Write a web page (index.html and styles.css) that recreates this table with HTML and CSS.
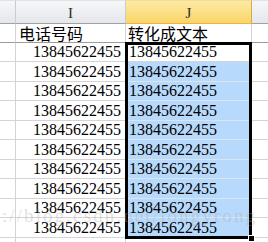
FILE: index.html
```html
<!DOCTYPE html>
<html>
<head>
<meta charset="utf-8">
<link rel="stylesheet" href="styles.css">
</head>
<body>
<div class="sheet">
  <div class="row head">
    <div class="c a"></div>
    <div class="c i hc">I</div>
    <div class="c j hc hsel">J</div>
    <div class="c k"></div>
  </div>
  <div class="row r1">
    <div class="c a"></div>
    <div class="c i cjk">电话号码</div>
    <div class="c j cjk">转化成文本</div>
    <div class="c k"></div>
  </div>
  <div class="row data">
    <div class="c a"></div><div class="c i num">13845622455</div><div class="c j num active">13845622455</div><div class="c k"></div>
  </div>
  <div class="row data tall">
    <div class="c a"></div><div class="c i num">13845622455</div><div class="c j num blue">13845622455</div><div class="c k"></div>
  </div>
  <div class="row data">
    <div class="c a"></div><div class="c i num">13845622455</div><div class="c j num blue">13845622455</div><div class="c k"></div>
  </div>
  <div class="row data tall">
    <div class="c a"></div><div class="c i num">13845622455</div><div class="c j num blue">13845622455</div><div class="c k"></div>
  </div>
  <div class="row data">
    <div class="c a"></div><div class="c i num">13845622455</div><div class="c j num blue">13845622455</div><div class="c k"></div>
  </div>
  <div class="row data tall">
    <div class="c a"></div><div class="c i num">13845622455</div><div class="c j num blue">13845622455</div><div class="c k"></div>
  </div>
  <div class="row data">
    <div class="c a"></div><div class="c i num">13845622455</div><div class="c j num blue">13845622455</div><div class="c k"></div>
  </div>
  <div class="row data tall">
    <div class="c a"></div><div class="c i num">13845622455</div><div class="c j num blue">13845622455</div><div class="c k"></div>
  </div>
  <div class="row data">
    <div class="c a"></div><div class="c i num">13845622455</div><div class="c j num blue">13845622455</div><div class="c k"></div>
  </div>
  <div class="row data tall">
    <div class="c a"></div><div class="c i num">13845622455</div><div class="c j num blue">13845622455</div><div class="c k"></div>
  </div>
  <div class="row data">
    <div class="c a"></div><div class="c i"></div><div class="c j"></div><div class="c k"></div>
  </div>
  <div class="selbox"></div>
  <div class="handle"></div>
  <div class="wm">http://blog.csdn.net/longyrong</div>
</div>
</body>
</html>
```
FILE: styles.css
```css
html, body {
  margin: 0;
  padding: 0;
  background: #ffffff;
  overflow: hidden;
}
.sheet {
  position: relative;
  width: 268px;
  height: 242px;
  overflow: hidden;
}
.row {
  display: grid;
  grid-template-columns: 16px 110px 126px 1fr;
  height: 19px;
}
.row.tall {
  height: 20px;
}
.row.head {
  height: 24px;
}
.c {
  box-sizing: border-box;
  border-right: 1px solid #d4d4d4;
  border-bottom: 1px solid #d4d4d4;
  display: flex;
  align-items: flex-end;
  white-space: nowrap;
}
.c.k {
  border-right: none;
}
.head .c {
  background: linear-gradient(#f6f7f9, #e4e6ea);
  border-right: 1px solid #c8ccd2;
  border-bottom: 1px solid #9ea3a9;
  border-top: 1px solid #dfe2e6;
}
.head .c.k {
  border-right: none;
}
.hc {
  justify-content: center;
  align-items: center;
  font-family: "Liberation Serif", serif;
  font-size: 15px;
  line-height: 15px;
  color: #2e2e2e;
  padding-top: 3px;
}
.head .c.hsel {
  background: linear-gradient(#fdeaa6, #f9d565);
  border-right: 1px solid #e0a64a;
  border-bottom: 1px solid #f0b347;
  border-top: 1px solid #f6dc8e;
}
.r1 .c {
  border-bottom: 1px solid #9c9c9c;
}
.cjk {
  font-family: "Noto Sans CJK SC", sans-serif;
  font-size: 16px;
  line-height: 18px;
  color: #000;
  padding-left: 3px;
}
.j.cjk {
  padding-left: 2px;
}
.num {
  font-family: "Liberation Serif", serif;
  font-size: 16px;
  line-height: 16px;
  color: #000;
  padding-bottom: 1px;
}
.i.num {
  justify-content: flex-end;
  padding-right: 4px;
}
.j.num {
  padding-left: 3px;
}
.blue {
  background: #b7d9fc;
  border-bottom-color: #dae5f0;
}
.selbox {
  position: absolute;
  left: 125px;
  top: 42px;
  width: 127px;
  height: 197px;
  box-sizing: border-box;
  border: 3px solid #000;
}
.handle {
  position: absolute;
  left: 248px;
  top: 235px;
  width: 5px;
  height: 5px;
  background: #000;
  border: 1px solid #fff;
}
.wm {
  position: absolute;
  left: -36px;
  top: 205px;
  font-family: "Liberation Serif", serif;
  font-size: 19px;
  letter-spacing: 2.1px;
  color: rgba(170, 170, 170, 0.35);
  white-space: nowrap;
  pointer-events: none;
}
```
